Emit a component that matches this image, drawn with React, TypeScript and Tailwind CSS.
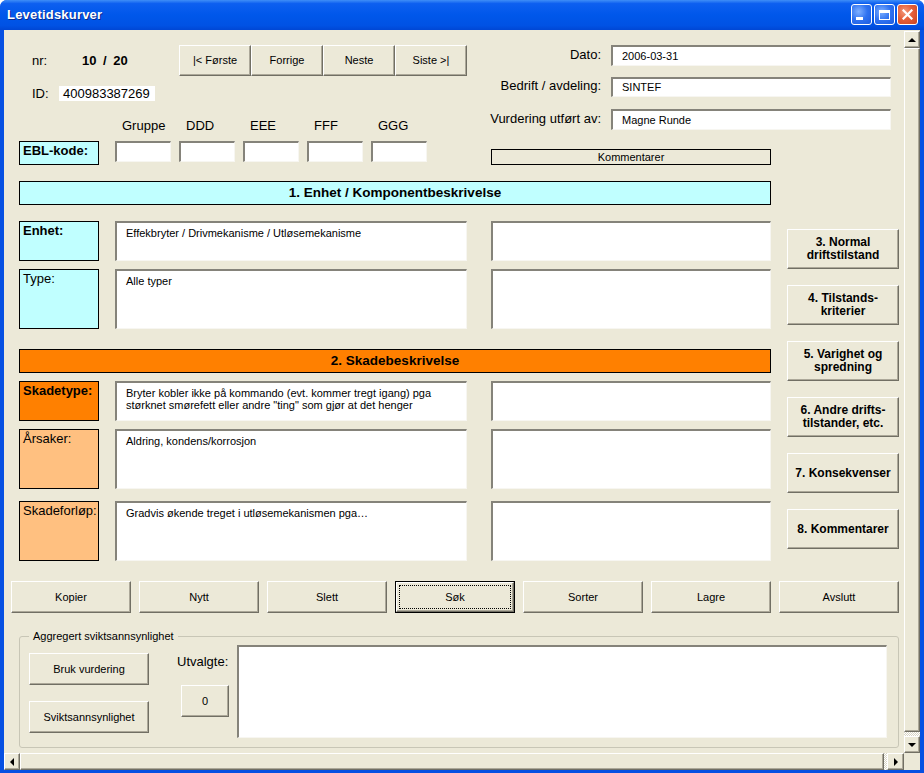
import React from "react";

const raised =
  "bg-[#ece9d8] border-t border-l border-b border-r border-t-white border-l-white border-b-[#716f64] border-r-[#716f64] shadow-[inset_-1px_-1px_0_#aca899]";
const sunken =
  "bg-white border-t-2 border-l-2 border-b border-r border-t-[#85837a] border-l-[#85837a] border-b-[#f7f6f1] border-r-[#f7f6f1]";

function Btn({ children, className = "" }: { children?: React.ReactNode; className?: string }) {
  return <div className={`flex items-center justify-center text-center ${raised} ${className}`}>{children}</div>;
}

function TitleButton({ kind }: { kind: "min" | "max" | "close" }) {
  const bg =
    kind === "close"
      ? "bg-[radial-gradient(circle_at_35%_35%,#f29a7c_0%,#e5603a_45%,#c8431f_100%)]"
      : "bg-[radial-gradient(circle_at_35%_35%,#7fb0ff_0%,#2f72f0_50%,#1c5ce0_100%)]";
  return (
    <div className={`w-[21px] h-[21px] rounded-[3px] border border-white flex items-center justify-center ${bg}`}>
      {kind === "min" && <div className="w-[7px] h-[3px] bg-white mt-[8px] -ml-[4px]" />}
      {kind === "max" && <div className="w-[11px] h-[10px] border border-white border-t-[3px]" />}
      {kind === "close" && (
        <svg width="11" height="11" viewBox="0 0 11 11">
          <path d="M1.5 1.5 L9.5 9.5 M9.5 1.5 L1.5 9.5" stroke="white" strokeWidth="2.2" strokeLinecap="square" />
        </svg>
      )}
    </div>
  );
}

function Arrow({ dir }: { dir: "up" | "down" | "left" | "right" }) {
  if (dir === "up") return <div className="w-0 h-0 border-x-[4px] border-x-transparent border-b-[4px] border-b-black" />;
  if (dir === "down") return <div className="w-0 h-0 border-x-[4px] border-x-transparent border-t-[4px] border-t-black" />;
  if (dir === "left") return <div className="w-0 h-0 border-y-[4px] border-y-transparent border-r-[4px] border-r-black" />;
  return <div className="w-0 h-0 border-y-[4px] border-y-transparent border-l-[4px] border-l-black" />;
}

const hatch = "bg-[repeating-conic-gradient(#ffffff_0_25%,#d8d5c6_0_50%)] bg-[length:2px_2px]";

function Row({
  label,
  bold,
  color,
  h,
  text,
  className = "",
}: {
  label: string;
  bold?: boolean;
  color: string;
  h: string;
  text?: React.ReactNode;
  className?: string;
}) {
  return (
    <div className={`flex ${h} ${className}`}>
      <div className={`w-[80px] border border-black pl-[3px] pt-[1px] text-[13px] leading-[15px] ${color} ${bold ? "font-bold" : ""}`}>
        {label}
      </div>
      <div className={`ml-[16px] w-[352px] ${sunken} pl-[9px] pt-[4px] text-[11px] leading-[12px]`}>{text}</div>
      <div className={`ml-[24px] w-[280px] ${sunken}`} />
    </div>
  );
}

export default function App() {
  return (
    <div className="w-[924px] h-[773px] flex flex-col overflow-hidden rounded-t-[7px] bg-[#0650e2] text-black font-['Liberation_Sans',Arial,sans-serif] text-[11px]">
      {/* title bar */}
      <div className="h-[30px] shrink-0 flex items-center pl-[7px] pr-[6px] bg-[linear-gradient(to_bottom,#3f8ef7_0%,#0d5ff0_12%,#0057ea_50%,#0052e4_85%,#0047d4_100%)]">
        <span className="text-white font-bold text-[13px] tracking-[0.2px] [text-shadow:1px_1px_0_#0b2a8a]">Levetidskurver</span>
        <div className="ml-auto flex gap-[2px] -mt-[1px]">
          <TitleButton kind="min" />
          <TitleButton kind="max" />
          <TitleButton kind="close" />
        </div>
      </div>

      <div className="flex flex-col flex-1 min-h-0 px-[4px] pb-[3px]">
        <div className="flex flex-1 min-h-0">
          {/* form content */}
          <div className="w-[900px] bg-[#ece9d8] flex flex-col overflow-hidden">
            {/* top section */}
            <div className="flex mt-[15px] ml-[15px]">
              <div className="w-[461px] flex flex-col">
                <div className="flex items-center h-[31px]">
                  <span className="ml-[13px] w-[50px] text-[13px]">nr:</span>
                  <span className="w-[97px] text-[13px] font-bold [word-spacing:3px]">10 / 20</span>
                  {["|< Første", "Forrige", "Neste", "Siste >|"].map((t) => (
                    <Btn key={t} className="w-[72px] h-[31px]">
                      {t}
                    </Btn>
                  ))}
                </div>
                <div className="flex items-center mt-[10px] h-[15px]">
                  <span className="ml-[13px] w-[27px] text-[13px]">ID:</span>
                  <div className="w-[96px] h-[15px] bg-white pl-[4px] text-[13px] leading-[15px]">400983387269</div>
                </div>
                <div className="flex mt-[17px] ml-[96px] text-[13px] leading-[16px]">
                  {["Gruppe", "DDD", "EEE", "FFF", "GGG"].map((t) => (
                    <div key={t} className="w-[64px] pl-[7px]">
                      {t}
                    </div>
                  ))}
                </div>
                <div className="flex items-start mt-[7px]">
                  <div className="w-[80px] h-[24px] bg-[#c0ffff] border border-black pl-[3px] text-[13px] leading-[18px] font-bold">
                    EBL-kode:
                  </div>
                  <div className="flex gap-[8px] ml-[16px]">
                    {[0, 1, 2, 3, 4].map((i) => (
                      <div key={i} className={`w-[56px] h-[21px] ${sunken}`} />
                    ))}
                  </div>
                </div>
              </div>

              <div className="flex flex-col">
                {[
                  ["Dato:", "2006-03-31", "h-[21px]", ""],
                  ["Bedrift / avdeling:", "SINTEF", "h-[20px]", "mt-[11px]"],
                  ["Vurdering utført av:", "Magne Runde", "h-[21px]", "mt-[12px]"],
                ].map(([l, v, h, m]) => (
                  <div key={l} className={`flex items-center ${m}`}>
                    <span className="w-[121px] text-right text-[13px] -mt-[2px]">{l}</span>
                    <div className={`ml-[10px] w-[280px] ${h} ${sunken} pl-[9px] flex items-center text-[11px]`}>{v}</div>
                  </div>
                ))}
                <div className="mt-[19px] ml-[11px] w-[280px] h-[16px] border border-black flex items-center justify-center text-[11px]">
                  Kommentarer
                </div>
              </div>
            </div>

            {/* middle section */}
            <div className="flex ml-[15px] mt-[16px]">
              <div className="w-[752px] flex flex-col">
                <div className="h-[24px] bg-[#c0ffff] border border-black flex items-center justify-center text-[13.5px] font-bold">
                  1. Enhet / Komponentbeskrivelse
                </div>
                <Row
                  label="Enhet:"
                  bold
                  color="bg-[#c0ffff]"
                  h="h-[40px]"
                  className="mt-[16px]"
                  text="Effekbryter / Drivmekanisme / Utløsemekanisme"
                />
                <Row label="Type:" color="bg-[#c0ffff]" h="h-[60px]" className="mt-[8px]" text="Alle typer" />
                <div className="mt-[20px] h-[24px] bg-[#ff8000] border border-black flex items-center justify-center text-[13.5px] font-bold">
                  2. Skadebeskrivelse
                </div>
                <Row
                  label="Skadetype:"
                  bold
                  color="bg-[#ff8000]"
                  h="h-[40px]"
                  className="mt-[8px]"
                  text={
                    <>
                      Bryter kobler ikke på kommando (evt. kommer tregt igang) pga
                      <br />
                      størknet smørefett eller andre "ting" som gjør at det henger
                    </>
                  }
                />
                <Row
                  label="Årsaker:"
                  color="bg-[#ffc080]"
                  h="h-[60px]"
                  className="mt-[8px]"
                  text="Aldring, kondens/korrosjon"
                />
                <Row
                  label="Skadeforløp:"
                  color="bg-[#ffc080]"
                  h="h-[60px]"
                  className="mt-[12px]"
                  text="Gradvis økende treget i utløsemekanismen pga…"
                />
              </div>
              <div className="ml-[16px] w-[112px] flex flex-col gap-[16px] pt-[48px] font-bold text-[12px] leading-[13px]">
                <Btn className="h-[40px]">
                  3. Normal
                  <br />
                  driftstilstand
                </Btn>
                <Btn className="h-[40px]">
                  4. Tilstands-
                  <br />
                  kriterier
                </Btn>
                <Btn className="h-[40px]">
                  5. Varighet og
                  <br />
                  spredning
                </Btn>
                <Btn className="h-[40px]">
                  6. Andre drifts-
                  <br />
                  tilstander, etc.
                </Btn>
                <Btn className="h-[40px]">7. Konsekvenser</Btn>
                <Btn className="h-[40px]">8. Kommentarer</Btn>
              </div>
            </div>

            {/* action buttons */}
            <div className="flex gap-[8px] ml-[7px] mt-[20px]">
              {["Kopier", "Nytt", "Slett"].map((t) => (
                <Btn key={t} className="w-[120px] h-[32px]">
                  {t}
                </Btn>
              ))}
              <div className="w-[120px] h-[32px] border border-black">
                <div className={`w-full h-full p-[2px] ${raised}`}>
                  <div className="w-full h-full border border-dotted border-black flex items-center justify-center">Søk</div>
                </div>
              </div>
              {["Sorter", "Lagre", "Avslutt"].map((t) => (
                <Btn key={t} className="w-[120px] h-[32px]">
                  {t}
                </Btn>
              ))}
            </div>

            {/* group box */}
            <fieldset className="ml-[15px] mt-[16px] w-[880px] border border-[#c8c6b6] rounded-[3px] px-[9px] pb-[9px]">
              <legend className="px-[4px] text-[11px] leading-[14px]">Aggregert sviktsannsynlighet</legend>
              <div className="flex items-start">
                <div className="flex flex-col gap-[16px] mt-[10px]">
                  <Btn className="w-[120px] h-[32px]">Bruk vurdering</Btn>
                  <Btn className="w-[120px] h-[32px]">Sviktsannsynlighet</Btn>
                </div>
                <div className="ml-[28px] w-[60px] flex flex-col">
                  <span className="mt-[11px] text-[13px] leading-[16px]">Utvalgte:</span>
                  <Btn className="mt-[15px] ml-[4px] w-[48px] h-[32px]">0</Btn>
                </div>
                <div className={`mt-[2px] w-[650px] h-[93px] ${sunken}`} />
              </div>
            </fieldset>
          </div>

          {/* vertical scrollbar */}
          <div className="w-[16px] flex flex-col bg-[#ece9d8]">
            <Btn className="h-[17px] mt-[1px]">
              <Arrow dir="up" />
            </Btn>
            <div className={`flex-1 ${raised}`} />
            <div className={`h-[4px] ${hatch}`} />
            <Btn className="h-[17px]">
              <Arrow dir="down" />
            </Btn>
          </div>
        </div>

        {/* horizontal scrollbar */}
        <div className="h-[17px] flex shrink-0">
          <div className="w-[900px] flex">
            <Btn className="w-[16px]">
              <Arrow dir="left" />
            </Btn>
            <div className={`flex-1 ${raised}`} />
            <div className={`w-[3px] ${hatch}`} />
            <Btn className="w-[17px]">
              <Arrow dir="right" />
            </Btn>
          </div>
          <div className="w-[16px] bg-[#ece9d8]" />
        </div>
      </div>
    </div>
  );
}
